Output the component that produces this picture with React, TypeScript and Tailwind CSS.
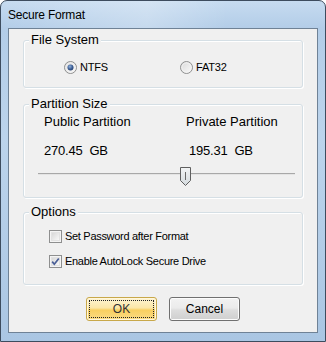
import React, { useState } from 'react';

const font = { fontFamily: '"Liberation Sans", Arial, sans-serif' };

const Radio: React.FC<{ checked: boolean; label: string; onClick: () => void; width: string }> = ({ checked, label, onClick, width }) => (
  <div className={`flex items-center gap-[3px] cursor-default ${width}`} onClick={onClick}>
    <svg width="13" height="13" viewBox="0 0 13 13">
      <defs>
        <linearGradient id="rg" x1="0" y1="0" x2="1" y2="1">
          <stop offset="0" stopColor="#d8d8d8" />
          <stop offset="1" stopColor="#fbfbfb" />
        </linearGradient>
        <radialGradient id="rd" cx="0.4" cy="0.35" r="0.7">
          <stop offset="0" stopColor="#8fb1da" />
          <stop offset="0.6" stopColor="#3d5e95" />
          <stop offset="1" stopColor="#24416f" />
        </radialGradient>
      </defs>
      <circle cx="6.5" cy="6.5" r="6" fill="url(#rg)" stroke="#8e8f8f" />
      <circle cx="6.5" cy="6.5" r="4.6" fill="none" stroke="#f4f4f4" strokeWidth="0.8" />
      {checked && <circle cx="6.5" cy="6.5" r="3" fill="url(#rd)" />}
    </svg>
    <span className="text-[11px] leading-[13px] text-black tracking-[-0.2px]">{label}</span>
  </div>
);

const Check: React.FC<{ checked: boolean; label: string; onClick: () => void }> = ({ checked, label, onClick }) => (
  <div className="flex items-center gap-[3px] cursor-default" onClick={onClick}>
    <svg width="13" height="13" viewBox="0 0 13 13">
      <defs>
        <linearGradient id="cg" x1="0" y1="0" x2="1" y2="1">
          <stop offset="0" stopColor="#d6d6d6" />
          <stop offset="1" stopColor="#fafafa" />
        </linearGradient>
      </defs>
      <rect x="0.5" y="0.5" width="12" height="12" fill="#f4f4f4" stroke="#8e8f8f" />
      <rect x="2.5" y="2.5" width="8" height="8" fill="url(#cg)" stroke="#e2e2e2" />
      {checked && (
        <path d="M3.2 6.6 L5.3 9.2 L9.8 3.4" fill="none" stroke="#4a5f97" strokeWidth="1.7" />
      )}
    </svg>
    <span className="text-[11px] leading-[13px] text-black tracking-[-0.3px]">{label}</span>
  </div>
);

const Group: React.FC<{ title: string; className: string; children: React.ReactNode }> = ({ title, className, children }) => (
  <div
    className={`relative mx-[14px] border border-[#d5dfe5] rounded-[3px] shadow-[inset_1px_1px_0_#ffffff,1px_1px_0_#ffffff] ${className}`}
  >
    <span className="absolute left-[5px] top-[-9px] px-[2px] bg-[#f0f0f0] text-[13px] leading-[15px] text-black">
      {title}
    </span>
    {children}
  </div>
);

export default function App() {
  const [fs, setFs] = useState<'ntfs' | 'fat32'>('ntfs');
  const [setPwd, setSetPwd] = useState(false);
  const [autoLock, setAutoLock] = useState(true);

  return (
    <div
      style={font}
      className="w-[326px] h-[342px] flex flex-col rounded-t-[7px] border border-[#3d4c5e] bg-[linear-gradient(180deg,#c6dbf0_0%,#b3cde8_8%,#bcd4ec_40%,#aac6e3_100%)] overflow-hidden"
    >
      <div className="h-[27px] flex items-center pl-[7px] shrink-0 bg-[linear-gradient(90deg,rgba(255,255,255,0)_0%,rgba(255,255,255,0.25)_45%,rgba(255,255,255,0)_70%)]">
        <span className="text-[12px] text-black tracking-[-0.2px]">Secure Format</span>
      </div>
      <div className="mx-[7px] mb-[8px] flex-1 flex flex-col border border-[#6f8296] bg-[#f0f0f0]">
        <Group title="File System" className="mt-[11px] h-[48px]">
          <div className="flex items-center pl-[40px] pt-[20px]">
            <Radio width="w-[116px]" checked={fs === 'ntfs'} label="NTFS" onClick={() => setFs('ntfs')} />
            <Radio width="" checked={fs === 'fat32'} label="FAT32" onClick={() => setFs('fat32')} />
          </div>
        </Group>

        <Group title="Partition Size" className="mt-[16px] h-[94px]">
          <div className="flex pl-[20px] pt-[9px] text-[13px] leading-[15px] text-black">
            <div className="w-[142px] flex flex-col gap-[14px]">
              <span>Public Partition</span>
              <span className="whitespace-pre tracking-[-0.2px]">270.45  GB</span>
            </div>
            <div className="flex flex-col gap-[14px]">
              <span>Private Partition</span>
              <span className="pl-[3px] whitespace-pre tracking-[-0.2px]">195.31  GB</span>
            </div>
          </div>
          <div className="relative ml-[14px] mt-[9px] w-[257px] h-[20px]">
            <div className="absolute left-0 right-0 top-[6px] h-[2px] bg-[#e4e4e4] border-t border-[#a8a8a8]" />
            <svg className="absolute left-[142px] top-0" width="12" height="20" viewBox="0 0 12 20">
              <defs>
                <linearGradient id="tg" x1="0" y1="0" x2="0" y2="1">
                  <stop offset="0" stopColor="#f2f4f5" />
                  <stop offset="1" stopColor="#d4dade" />
                </linearGradient>
              </defs>
              <path d="M0.5 0.5 H10.5 V13.5 L5.5 18.5 L0.5 13.5 Z" fill="url(#tg)" stroke="#5f5f5f" />
              <path d="M5.5 5 V13" stroke="#6a6a6a" />
            </svg>
          </div>
        </Group>

        <Group title="Options" className="mt-[14px] h-[73px]">
          <div className="flex flex-col gap-[12px] pl-[25px] pt-[17px]">
            <Check checked={setPwd} label="Set Password after Format" onClick={() => setSetPwd(!setPwd)} />
            <Check checked={autoLock} label="Enable AutoLock Secure Drive" onClick={() => setAutoLock(!autoLock)} />
          </div>
        </Group>

        <div className="flex justify-center gap-[12px] mt-[12px]">
          <button className="w-[71px] h-[24px] rounded-[3px] border border-[#c8a84a] bg-[linear-gradient(180deg,#fdf4d3_0%,#fbe7a8_45%,#f8cf60_55%,#fbdc86_100%)] p-[2px] text-[12px] text-[#333] shadow-[inset_0_0_0_1px_#fff6dc]">
            <div className="w-full h-full flex items-center justify-center border border-dotted border-[#222]">OK</div>
          </button>
          <button className="w-[71px] h-[24px] rounded-[3px] border border-[#707070] bg-[linear-gradient(180deg,#f2f2f2_0%,#ebebeb_45%,#dddddd_55%,#cfcfcf_100%)] text-[12px] text-black shadow-[inset_0_0_0_1px_#fcfcfc]">
            Cancel
          </button>
        </div>
      </div>
    </div>
  );
}
